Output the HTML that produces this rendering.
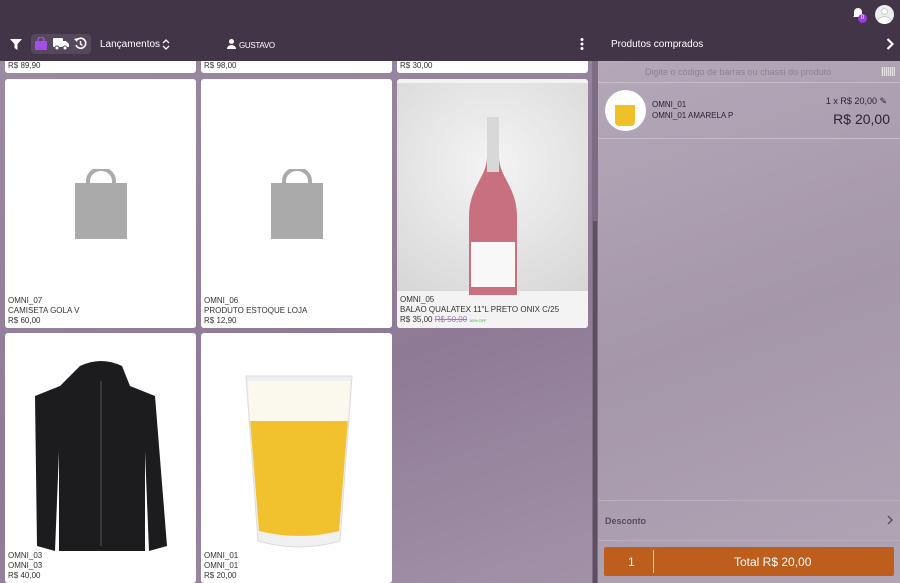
<!DOCTYPE html><html><head><meta charset="utf-8"><style>
*{box-sizing:border-box;margin:0;padding:0}
body{width:900px;height:583px;overflow:hidden;font-family:"Liberation Sans",sans-serif;background:#9a88a0;position:relative}
.top{position:absolute;left:0;top:0;width:900px;height:61px;background:#433548}
.left{position:absolute;left:0;top:61px;width:593px;height:522px;background:linear-gradient(160deg,#9b8aa2,#8f7a96 60%,#a292a8)}
.sb{position:absolute;left:592px;top:61px;width:6px;height:522px;background:#7d6c84}
.sb i{position:absolute;left:1px;top:160px;width:4px;height:362px;background:#5d4f62}
.right{position:absolute;left:598px;top:61px;width:302px;height:522px;background:linear-gradient(160deg,#b3a8b8,#a597aa 50%,#b0a5b5)}
.card{position:absolute;background:#fff;border-radius:3px;overflow:hidden;font-size:8px;color:#333;line-height:10px}
.card .t{position:absolute;left:3px;bottom:2px}
.w{color:#fff}
</style></head><body>
<div class="top"></div>
<div class="left"></div>
<div class="sb"><i></i></div>
<div class="right"></div>
<svg style="position:absolute;left:10px;top:39px" width="12" height="11" viewBox="0 0 12 11"><path d="M0 0h12L7.5 5v6L4.5 9V5z" fill="#fff"/></svg>
<div style="position:absolute;left:31px;top:34px;width:60px;height:20px;background:#57475c;border-radius:4px"></div>
<svg style="position:absolute;left:35px;top:37px" width="12" height="13" viewBox="0 0 12 13"><path d="M3 5V3a3 3 0 016 0v2" stroke="#a44ee8" stroke-width="1.5" fill="none"/><rect x="0" y="4" width="12" height="9" rx="1" fill="#a44ee8"/></svg>
<svg style="position:absolute;left:53px;top:38px" width="16" height="12" viewBox="0 0 16 12"><rect x="0" y="0" width="10" height="9" rx="1" fill="#fff"/><path d="M10 3h3l3 3v3h-6z" fill="#fff"/><circle cx="4" cy="10" r="2" fill="#fff" stroke="#57475c"/><circle cx="12" cy="10" r="2" fill="#fff" stroke="#57475c"/></svg>
<svg style="position:absolute;left:74px;top:37px" width="13" height="13" viewBox="0 0 13 13"><path d="M2.5 3.5A5 5 0 1 1 2 8" stroke="#fff" stroke-width="1.6" fill="none"/><path d="M0 2l3 3 1-4z" fill="#fff"/><path d="M6.5 4v3l2 1.5" stroke="#fff" stroke-width="1.4" fill="none"/></svg>
<div class="w" style="position:absolute;left:100px;top:39px;font-size:10px">Lançamentos</div>
<svg style="position:absolute;left:162px;top:39px" width="8" height="11" viewBox="0 0 8 11"><path d="M1 4l3-3 3 3M1 7l3 3 3-3" stroke="#fff" stroke-width="1.3" fill="none"/></svg>
<svg style="position:absolute;left:227px;top:39px" width="9" height="10" viewBox="0 0 9 10"><circle cx="4.5" cy="2.5" r="2.5" fill="#fff"/><path d="M0 10a4.5 4 0 019 0z" fill="#fff"/></svg>
<div class="w" style="position:absolute;left:239px;top:41px;font-size:8px;letter-spacing:-.3px">GUSTAVO</div>
<svg style="position:absolute;left:580px;top:38px" width="4" height="12" viewBox="0 0 4 12"><circle cx="2" cy="1.5" r="1.5" fill="#fff"/><circle cx="2" cy="6" r="1.5" fill="#fff"/><circle cx="2" cy="10.5" r="1.5" fill="#fff"/></svg>
<div class="w" style="position:absolute;left:611px;top:39px;font-size:10px">Produtos comprados</div>
<svg style="position:absolute;left:886px;top:38px" width="8" height="12" viewBox="0 0 8 12"><path d="M1.5 1l5 5-5 5" stroke="#fff" stroke-width="2.2" fill="none"/></svg>
<svg style="position:absolute;left:852px;top:7px" width="12" height="13" viewBox="0 0 12 13"><path d="M2 9V5a4 4 0 018 0v4l1 1H1z" fill="#fff"/></svg>
<div style="position:absolute;left:858px;top:14px;width:9px;height:9px;border-radius:50%;background:#9b3ee0;color:#fff;font-size:6px;text-align:center;line-height:9px">0</div>
<div style="position:absolute;left:875px;top:5px;width:19px;height:19px;border-radius:50%;background:#eee;overflow:hidden"><div style="position:absolute;left:6px;top:3px;width:7px;height:7px;border-radius:50%;background:#fff;border:1px solid #ccc"></div><div style="position:absolute;left:2px;top:11px;width:15px;height:12px;border-radius:50%;background:#fff;border:1px solid #ccc"></div></div>
<div class="card" style="left:5px;top:55px;width:191px;height:18px"><span class="t">R$ 89,90</span></div>
<div class="card" style="left:201px;top:55px;width:191px;height:18px"><span class="t">R$ 98,00</span></div>
<div class="card" style="left:397px;top:55px;width:191px;height:18px"><span class="t">R$ 30,00</span></div>
<div style="position:absolute;left:0;top:55px;width:593px;height:6px;background:#433548"></div>
<div class="card" style="left:5px;top:79px;width:191px;height:249px">
<svg style="position:absolute;left:70px;top:90px" width="52" height="70" viewBox="0 0 52 70"><path d="M13 18V12a13 12 0 0126 0v6" stroke="#aaa" stroke-width="4" fill="none"/><rect x="0" y="14" width="52" height="56" fill="#aaa"/></svg>
<span class="t">OMNI_07<br>CAMISETA GOLA V<br>R$ 60,00</span></div>
<div class="card" style="left:201px;top:79px;width:191px;height:249px">
<svg style="position:absolute;left:70px;top:90px" width="52" height="70" viewBox="0 0 52 70"><path d="M13 18V12a13 12 0 0126 0v6" stroke="#aaa" stroke-width="4" fill="none"/><rect x="0" y="14" width="52" height="56" fill="#aaa"/></svg>
<span class="t">OMNI_06<br>PRODUTO ESTOQUE LOJA<br>R$ 12,90</span></div>
<div class="card" style="left:397px;top:79px;width:191px;height:249px;background:#f3f3f3">
<div style="position:absolute;left:0;top:4px;width:191px;height:208px;background:radial-gradient(circle at 50% 40%,#f4f4f4,#d6d6d6)"></div>
<svg style="position:absolute;left:70px;top:38px" width="52" height="185" viewBox="0 0 52 185"><path d="M20 0h12v40c0 20 18 30 18 60v85H2v-85c0-30 18-40 18-60z" fill="#c97080"/><path d="M20 0h12v55H20z" fill="#d8d8d8"/><rect x="4" y="125" width="44" height="45" fill="#f8f8f8"/></svg>
<span class="t" style="background:#f3f3f3">OMNI_05<br>BALAO QUALATEX 11"L PRETO ONIX C/25<br>R$ 35,00 <s style="color:#a47ab0">R$ 50,00</s> <span style="color:#3a3;font-size:4px">30% OFF</span></span></div>
<div class="card" style="left:5px;top:333px;width:191px;height:250px">
<svg style="position:absolute;left:25px;top:28px" width="142" height="195" viewBox="0 0 142 195"><path d="M50 5q21-10 42 0l8 20 25 10 12 150-18 5-4-100 0 100H29l0-100-4 100-18-5L5 35l25-10z" fill="#1c1c1e"/><path d="M71 20v165" stroke="#555"/></svg>
<span class="t">OMNI_03<br>OMNI_03<br>R$ 40,00</span></div>
<div class="card" style="left:201px;top:333px;width:191px;height:250px">
<svg style="position:absolute;left:42px;top:38px" width="112" height="180" viewBox="0 0 112 180"><path d="M3 5h106l-12 165q-41 12-82 0z" fill="#f0f0f0" stroke="#ddd"/><path d="M7 48h98L96 160q-40 10-80 0z" fill="#f2c22e"/><path d="M5 10h102l-2 40H7z" fill="#fbf8ee"/></svg>
<span class="t">OMNI_01<br>OMNI_01<br>R$ 20,00</span></div>
<div style="position:absolute;left:645px;top:67px;font-size:9px;color:#8d8294">Digite o código de barras ou chassi do produto</div>
<div style="position:absolute;left:881px;top:67px;width:14px;height:9px;background:repeating-linear-gradient(90deg,#bbb 0 1px,#ddd 1px 2px)"></div>
<div style="position:absolute;left:598px;top:82px;width:302px;height:1px;background:#c6bdca"></div>
<div style="position:absolute;left:605px;top:90px;width:41px;height:41px;border-radius:50%;background:#fff;overflow:hidden"><div style="position:absolute;left:10px;top:8px;width:20px;height:28px;background:linear-gradient(#fff 0 25%,#f0c02a 25%);border-radius:0 0 4px 4px"></div></div>
<div style="position:absolute;left:652px;top:99px;font-size:8px;color:#2d2433;line-height:11px">OMNI_01<br>OMNI_01 AMARELA P</div>
<div style="position:absolute;right:13px;top:96px;font-size:9px;color:#2d2433;white-space:nowrap">1 x R$ 20,00 ✎</div>
<div style="position:absolute;right:10px;top:111px;font-size:14px;color:#2d2433;white-space:nowrap">R$ 20,00</div>
<div style="position:absolute;left:598px;top:138px;width:302px;height:1px;background:#c6bdca"></div>
<div style="position:absolute;left:598px;top:500px;width:302px;height:1px;background:#b7adbb"></div>
<div style="position:absolute;left:605px;top:516px;font-size:9px;font-weight:bold;color:#574c5c">Desconto</div>
<svg style="position:absolute;left:887px;top:515px" width="6" height="10" viewBox="0 0 6 10"><path d="M1 1l4 4-4 4" stroke="#574c5c" stroke-width="1.4" fill="none"/></svg>
<div style="position:absolute;left:598px;top:540px;width:302px;height:1px;background:#b7adbb"></div>
<div style="position:absolute;left:604px;top:547px;width:290px;height:29px;background:#bd5e1d;border-radius:2px;color:#fff;font-size:12px">
<span style="position:absolute;left:24px;top:8px">1</span>
<div style="position:absolute;left:49px;top:3px;width:1px;height:23px;background:#f0c9a8"></div>
<span style="position:absolute;left:130px;top:8px">Total R$ 20,00</span></div>
</body></html>
